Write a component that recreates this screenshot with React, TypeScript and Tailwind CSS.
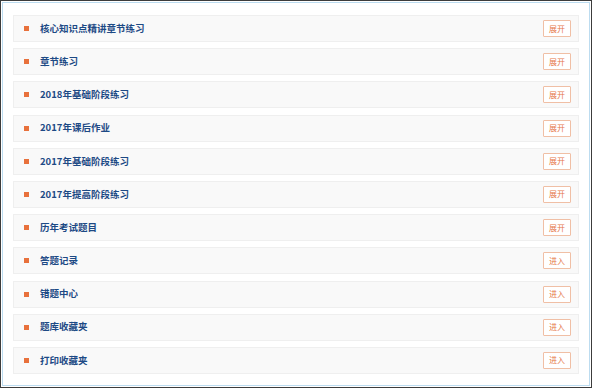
import React from "react";

const rows: { t: string; b: string }[] = [
  { t: "核心知识点精讲章节练习", b: "展开" },
  { t: "章节练习", b: "展开" },
  { t: "2018年基础阶段练习", b: "展开" },
  { t: "2017年课后作业", b: "展开" },
  { t: "2017年基础阶段练习", b: "展开" },
  { t: "2017年提高阶段练习", b: "展开" },
  { t: "历年考试题目", b: "展开" },
  { t: "答题记录", b: "进入" },
  { t: "错题中心", b: "进入" },
  { t: "题库收藏夹", b: "进入" },
  { t: "打印收藏夹", b: "进入" },
];

export default function App() {
  return (
    <div
      className="w-[592px] h-[388px] border border-[#3c3c3c] bg-white p-[1px]"
      style={{ fontFamily: '"Noto Sans CJK SC", "Noto Sans", sans-serif' }}
    >
      <div className="w-full h-full border border-[#bcdcf0] bg-white px-[10px] pt-[12px]">
        <div className="flex flex-col gap-[6.2px]">
          {rows.map((r) => (
            <div
              key={r.t}
              className="h-[27px] flex items-center bg-[#f9f9f9] border border-[#efefef] pl-[10px] pr-[7px]"
            >
              <span className="w-[5px] h-[5px] bg-[#e8713c] shrink-0" />
              <span className="ml-[11px] text-[9.5px] font-bold text-[#1d4a85] leading-none">
                {r.t}
              </span>
              <span className="ml-auto w-[28px] h-[17px] flex items-center justify-center border border-[#f0bfa5] bg-white text-[8px] text-[#e5784a] leading-none rounded-[1px]">
                {r.b}
              </span>
            </div>
          ))}
        </div>
      </div>
    </div>
  );
}
